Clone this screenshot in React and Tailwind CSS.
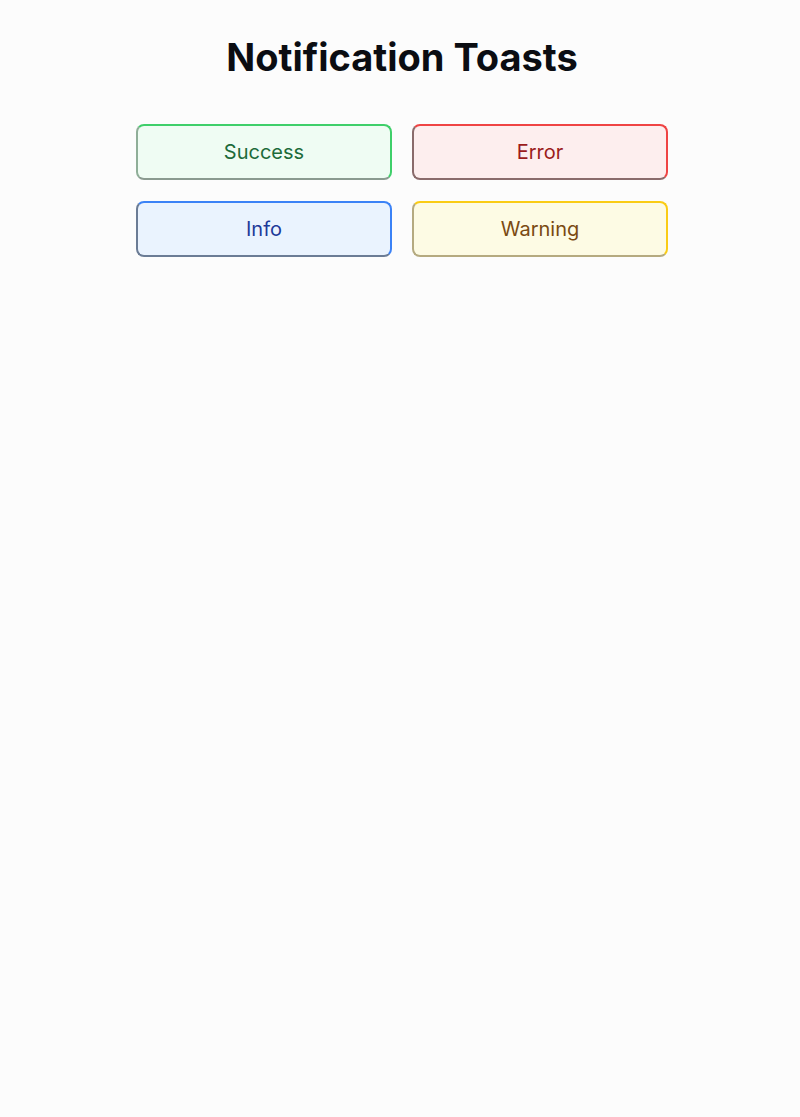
const toasts = [
  { label: "Success", cls: "bg-[#effcf3] text-[#1d6b3a] border-t-[#3fcf6a] border-r-[#3fcf6a] border-l-[#8fae98] border-b-[#8a9a8f]" },
  { label: "Error", cls: "bg-[#fdeeee] text-[#9b1c1c] border-t-[#ef4444] border-r-[#ef4444] border-l-[#8a6b6b] border-b-[#8a6b6b]" },
  { label: "Info", cls: "bg-[#eaf3fe] text-[#1e3a9a] border-t-[#3b82f6] border-r-[#3b82f6] border-l-[#6b7c95] border-b-[#6b7c95]" },
  { label: "Warning", cls: "bg-[#fdfbe4] text-[#7a4a12] border-t-[#facc15] border-r-[#facc15] border-l-[#b5aa80] border-b-[#b5aa80]" },
]

export default function App() {
  return (
    <div className="min-h-[1117px] bg-[#fcfcfc] font-['Inter',sans-serif] pt-[32px]">
      <h1 className="text-center text-[38px] leading-[50px] font-bold text-[#0b0d12] pl-1">
        Notification Toasts
      </h1>
      <div className="mx-auto mt-[42px] grid w-[532px] translate-x-[2px] grid-cols-2 gap-x-[20px] gap-y-[21px]">
        {toasts.map((t) => (
          <button
            key={t.label}
            type="button"
            className={"h-14 rounded-lg border-2 text-[20px] " + t.cls}
          >
            {t.label}
          </button>
        ))}
      </div>
    </div>
  )
}
